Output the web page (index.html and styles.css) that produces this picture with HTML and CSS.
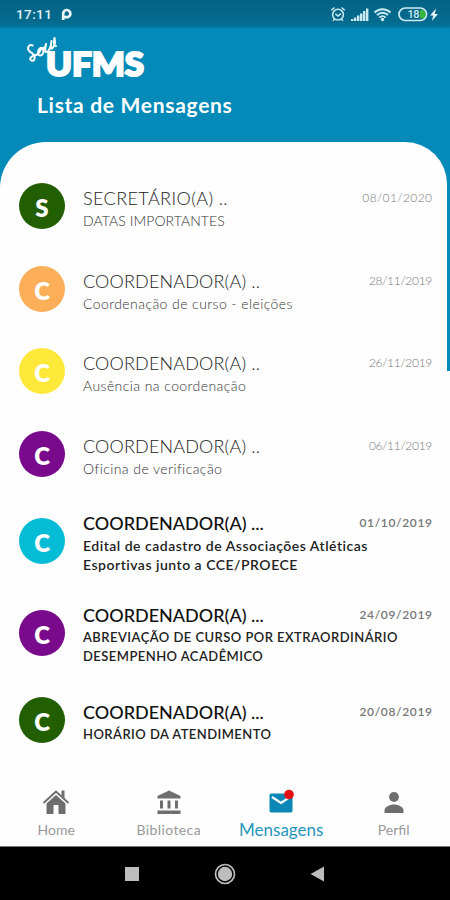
FILE: index.html
```
<!DOCTYPE html>
<html lang="pt-BR">
<head>
    <meta charset="UTF-8">
    <meta name="viewport" content="width=device-width, initial-scale=1.0">
    <title>Sou UFMS - Mensagens</title>
    <link rel="stylesheet" href="styles.css">
</head>
<body>
    <div class="statusbar">
        <span class="clock">17:11</span>
        <svg class="parking" width="11" height="13" viewBox="0 0 11 13"><path d="M2.2 12V6A3.6 3.6 0 1 1 5.8 9.2H3" fill="none" stroke="#e8f6fa" stroke-width="2.7"/></svg>
        <svg class="status-icons" width="110" height="18" viewBox="0 0 110 18">
            <g fill="none" stroke="#cdebf2" stroke-width="1.5">
                <circle cx="8" cy="9.7" r="5.4"/>
                <path d="M5.3 8.7L8 11l2.8-2.3M1.3 5.2L4.5 2.5M11.5 2.5l3.2 2.7M4.5 14.2L3 15.8M11.5 14.2l1.5 1.6"/>
            </g>
            <path d="M21 14h2.400v2h-2.400zM24 12.500h2.400v3.500h-2.400zM27 10.500h2.400v5.500h-2.400zM30 8.500h2.400v7.500h-2.400zM33 6h2.400V16h-2.400zM36 3.500h2.400V16h-2.400z" fill="#cdebf2"/>
            <g fill="none" stroke="#cdebf2" stroke-width="2">
                <path d="M44.500 7.500a11.500 11.500 0 0 1 16 0M47 10.100a7.800 7.800 0 0 1 11 0M49.400 12.600a4.400 4.400 0 0 1 6.200 0"/>
            </g>
            <circle cx="52.500" cy="14.500" r="1.7" fill="#cdebf2"/>
            <rect x="69" y="3" width="27.500" height="12.500" rx="6.200" fill="none" stroke="#cdebf2" stroke-width="1.7"/>
            <path d="M90 5h1.500a4.200 4.200 0 0 1 0 8.500H90z" fill="#36b83c"/>
            <text class="battery" x="77.500" y="13.200">18</text>
            <path d="M106 3.500l-6 7h3.300l-1.500 5.500 6.200-7h-3.300z" fill="#e8f6fa"/>
        </svg>
    </div>
    <div class="page">
        <header class="header">
            <svg class="logo" width="130" height="56" viewBox="0 0 130 56">
                <path d="M7.500 8.500Q4 7 3 11Q3 14 7 16Q11 19 9 23Q7 25 5 22Q6 19 11 18Q15 16 16 11Q12 13 13.500 18Q17 20 18.500 15Q18 10 15.500 11Q18 13 20.500 9L21 7Q19 16 22 15Q26 12 26.500 4Q25 14 27.500 11Q31 8 29.500 1Q28 9 31 9" fill="none" stroke="#fff" stroke-width="2" stroke-linecap="round" stroke-linejoin="round"/>
                <text class="logo-text" x="21" y="38.700" textLength="98" lengthAdjust="spacingAndGlyphs">UFMS</text>
            </svg>
            <h1>Lista de Mensagens</h1>
        </header>
        <main class="messages">
            <div class="message">
                <div class="avatar green">S</div>
                <div class="content">
                    <div class="top"><span class="sender wide">SECRETÁRIO(A) ..</span><span class="date">08/01/2020</span></div>
                    <p class="caps">DATAS IMPORTANTES</p>
                </div>
            </div>
            <div class="message">
                <div class="avatar orange">C</div>
                <div class="content">
                    <div class="top"><span class="sender">COORDENADOR(A) ..</span><span class="date narrow">28/11/2019</span></div>
                    <p>Coordenação de curso - eleições</p>
                </div>
            </div>
            <div class="message">
                <div class="avatar yellow">C</div>
                <div class="content">
                    <div class="top"><span class="sender">COORDENADOR(A) ..</span><span class="date narrow">26/11/2019</span></div>
                    <p>Ausência na coordenação</p>
                </div>
            </div>
            <div class="message">
                <div class="avatar purple">C</div>
                <div class="content">
                    <div class="top"><span class="sender">COORDENADOR(A) ..</span><span class="date narrow">06/11/2019</span></div>
                    <p>Oficina de verificação</p>
                </div>
            </div>
            <div class="message unread tall">
                <div class="avatar cyan">C</div>
                <div class="content">
                    <div class="top"><span class="sender">COORDENADOR(A) ...</span><span class="date">01/10/2019</span></div>
                    <p>Edital de cadastro de Associações Atléticas<br>Esportivas junto a CCE/PROECE</p>
                </div>
            </div>
            <div class="message unread tall">
                <div class="avatar purple">C</div>
                <div class="content">
                    <div class="top"><span class="sender">COORDENADOR(A) ...</span><span class="date">24/09/2019</span></div>
                    <p class="caps">ABREVIAÇÃO DE CURSO POR EXTRAORDINÁRIO<br>DESEMPENHO ACADÊMICO</p>
                </div>
            </div>
            <div class="message unread">
                <div class="avatar green">C</div>
                <div class="content">
                    <div class="top"><span class="sender">COORDENADOR(A) ...</span><span class="date">20/08/2019</span></div>
                    <p class="caps">HORÁRIO DA ATENDIMENTO</p>
                </div>
            </div>
        </main>
    </div>
    <nav class="tabs">
        <div class="tab">
            <svg width="28" height="26" viewBox="0 0 28 26" fill="#6e6e6e">
                <path d="M1.500 14L14 2.500 26.500 14" fill="none" stroke="#6e6e6e" stroke-width="2"/>
                <path d="M19.500 1.500h3v8l-3-3zM4.500 14.500L14 6l9.500 8.500V25h-7v-9h-5v9h-7z"/>
            </svg>
            <span>Home</span>
        </div>
        <div class="tab">
            <svg width="28" height="26" viewBox="0 0 28 26" fill="#6e6e6e">
                <path d="M14 1.500L25.500 7v2.500h-23V7zM5 11.500h3v8H5zM12.500 11.500h3v8h-3zM20 11.500h3v8h-3zM2.500 21.500h23V25h-23z"/>
            </svg>
            <span class="wide">Biblioteca</span>
        </div>
        <div class="tab active">
            <svg width="28" height="26" viewBox="0 0 28 26">
                <rect x="2.500" y="4.500" width="23" height="19" rx="1.800" fill="#0a87b4"/>
                <path d="M5 8l9 6 9-6" fill="none" stroke="#fff" stroke-width="2.200"/>
                <circle cx="22" cy="5.500" r="4.800" fill="#e60f14"/>
            </svg>
            <span>Mensagens</span>
        </div>
        <div class="tab">
            <svg width="28" height="26" viewBox="0 0 28 26" fill="#6e6e6e">
                <circle cx="14" cy="8" r="4.900"/>
                <path d="M4.500 24v-2.500c0-3.500 5-6 9.500-6s9.500 2.500 9.500 6V24z"/>
            </svg>
            <span>Perfil</span>
        </div>
    </nav>
    <div class="sysnav">
        <svg width="24" height="24" viewBox="0 0 24 24"><rect x="5" y="5" width="14" height="14" fill="#bdbdbd"/></svg>
        <svg width="24" height="24" viewBox="0 0 24 24"><circle cx="12" cy="12" r="9.500" fill="none" stroke="#bdbdbd" stroke-width="1.700"/><circle cx="12" cy="12" r="7.200" fill="#bdbdbd"/></svg>
        <svg width="24" height="24" viewBox="0 0 24 24"><path d="M4.500 12L18 4.500v15z" fill="#bdbdbd"/></svg>
    </div>
</body>
</html>
```
FILE: styles.css
```
* {
    box-sizing: border-box;
}
body {
    margin: 0;
    width: 450px;
    height: 900px;
    overflow: hidden;
    display: flex;
    flex-direction: column;
    background: #fefefe;
    font-family: Lato, "Liberation Sans", sans-serif;
}
.statusbar {
    height: 28px;
    flex: none;
    display: flex;
    align-items: center;
    padding: 0 10px 0 16px;
    background: linear-gradient(#036384, #046b8f 80%, #047aa3);
    color: #e0f3f8;
}
.clock {
    font: 500 13.5px Roboto, sans-serif;
    width: 36px;
    letter-spacing: 0.4px;
}
.parking {
    margin-left: 9px;
}
.status-icons {
    margin-left: auto;
}
.battery {
    font: 500 11px Roboto, sans-serif;
    letter-spacing: -0.6px;
    fill: #cdebf2;
}
/* the blue stops at 371px, behind the message panel */
.page {
    flex: 1;
    background: linear-gradient(#038ab8 343.5px, #fefefe 343.5px);
}
.header {
    height: 114px;
    padding: 9px 0 0 25px;
    color: #fff;
}
.logo {
    display: block;
}
.logo-text {
    font: 900 33px Lato, sans-serif;
    fill: #fff;
    stroke: #fff;
    stroke-width: 2.2px;
}
h1 {
    margin: -1px 0 0 12px;
    font-size: 21px;
    line-height: 26px;
    font-weight: 700;
    letter-spacing: 0.7px;
}
.messages {
    height: 639px;
    margin-right: 3px;
    padding: 23px 15px 0 19px;
    background: #fefefe;
    border-radius: 46px 42px 0 0;
}
.message {
    height: 82.5px;
    display: flex;
    align-items: center;
}
.tall {
    height: 91.75px;
}
.avatar {
    width: 46px;
    height: 46px;
    flex: none;
    border-radius: 50%;
    color: #fff;
    font-size: 24px;
    font-weight: 800;
    line-height: 49px;
    text-align: center;
}
.green { background: #225f03; }
.orange { background: #fdae59; }
.yellow { background: #fee93b; }
.purple { background: #790a8c; }
.cyan { background: #05bcd6; }
.content {
    flex: 1;
    margin: 5px 0 0 18px;
    white-space: nowrap;
}
.top {
    display: flex;
    justify-content: space-between;
    height: 24px;
}
.sender {
    font-size: 18px;
    line-height: 22px;
    font-weight: 300;
    color: #222;
    letter-spacing: 0.17px;
}
.wide {
    letter-spacing: 0.4px;
}
.date {
    font-size: 12px;
    font-weight: 300;
    line-height: 22px;
    color: #777;
    letter-spacing: 0.4px;
    margin-right: -0.4px;
}
.narrow {
    letter-spacing: -0.3px;
    margin-right: 0;
}
.content p {
    margin: 0;
    font-size: 14px;
    line-height: 19.5px;
    font-weight: 300;
    color: #333;
    letter-spacing: 0.42px;
}
.content .caps {
    letter-spacing: 0.08px;
}
.unread .sender {
    font-weight: 500;
    color: #111;
    letter-spacing: 0;
}
.unread p {
    font-weight: 600;
    color: #222;
    letter-spacing: 0.5px;
}
.unread .caps {
    font-size: 13px;
    letter-spacing: 0.45px;
}
.unread .date {
    font-weight: 600;
    color: #777;
    letter-spacing: 0.65px;
    margin-right: -0.65px;
}
.tabs {
    height: 66px;
    flex: none;
    display: flex;
    background: #fefefe;
    border-bottom: 1px solid #777;
}
.tab {
    flex: 1;
    display: flex;
    flex-direction: column;
    align-items: center;
    padding-top: 8px;
    font-size: 14px;
    line-height: 30px;
    color: #999;
}
.tab svg {
    flex: none;
}
.active {
    font-size: 17px;
    color: #2795bc;
}
.sysnav {
    height: 53px;
    flex: none;
    display: flex;
    justify-content: center;
    align-items: center;
    gap: 69px;
    background: #000;
}
```
